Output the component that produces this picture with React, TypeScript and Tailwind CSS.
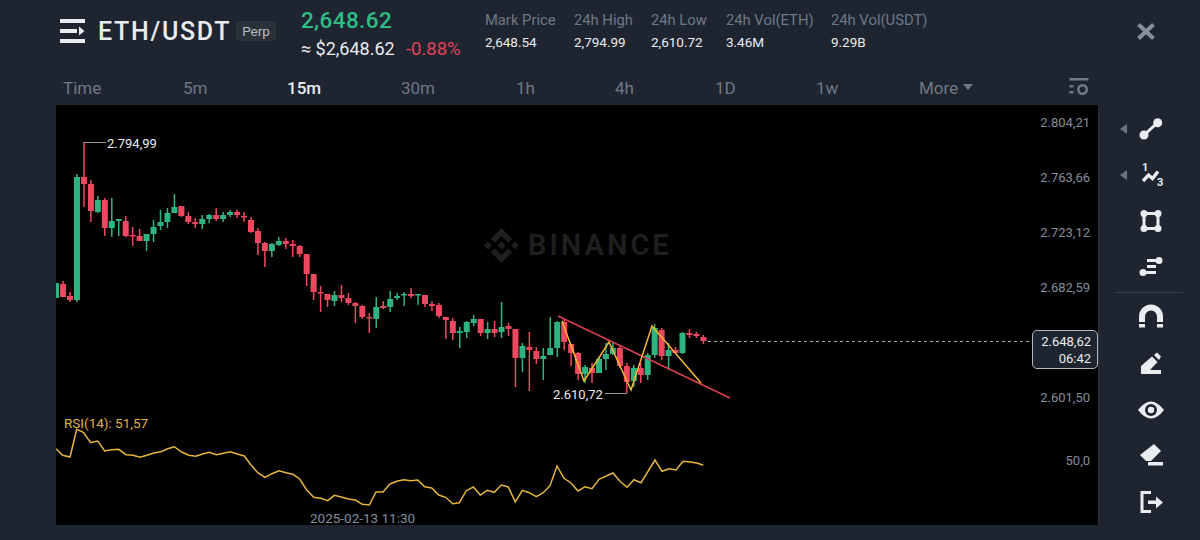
// [up, high, bodyTop, bodyBottom, low], one candle every 6.96px
const candles: [number, number, number, number, number][] = [
  [1, 283, 283, 298, 298], [0, 281, 284, 297, 297], [0, 292, 296, 300, 302], [1, 174, 177, 300, 302],
  [0, 142, 177, 184, 207], [0, 180, 184, 211, 222], [1, 196, 200, 212, 213], [0, 198, 200, 228, 236],
  [1, 198, 221, 228, 237], [1, 219, 219, 221, 236], [0, 216, 221, 236, 237], [0, 227, 235, 236, 246],
  [0, 229, 236, 241, 241], [1, 234, 234, 241, 251], [1, 220, 227, 234, 242], [1, 210, 222, 226, 230],
  [1, 208, 213, 222, 228], [1, 194, 207, 213, 213], [0, 206, 206, 216, 217], [0, 212, 216, 222, 224],
  [0, 218, 222, 224, 228], [1, 215, 219, 224, 229], [1, 214, 215, 219, 223], [0, 208, 215, 219, 221],
  [1, 212, 215, 219, 222], [1, 210, 212, 215, 217], [0, 210, 212, 215, 218], [0, 212, 216, 217, 222],
  [0, 217, 220, 232, 233], [0, 228, 231, 243, 255], [0, 242, 243, 251, 267], [1, 243, 244, 251, 257],
  [1, 237, 241, 245, 246], [0, 238, 241, 244, 249], [0, 240, 244, 246, 257], [0, 245, 246, 254, 257],
  [0, 254, 254, 274, 286], [0, 274, 274, 292, 300], [0, 286, 292, 293, 312], [0, 294, 294, 300, 307],
  [1, 291, 295, 301, 306], [0, 285, 295, 298, 302], [0, 293, 298, 303, 305], [0, 302, 303, 306, 323],
  [0, 305, 306, 317, 319], [0, 313, 317, 318, 333], [1, 297, 307, 319, 328], [0, 301, 306, 308, 309],
  [1, 291, 299, 307, 312], [1, 293, 296, 298, 300], [1, 292, 294, 295, 306], [0, 288, 294, 296, 298],
  [1, 294, 294, 295, 305], [0, 295, 295, 304, 307], [0, 301, 304, 306, 311], [0, 303, 305, 316, 318],
  [0, 317, 317, 320, 339], [0, 318, 321, 333, 340], [1, 327, 331, 333, 348], [1, 321, 322, 332, 338],
  [1, 315, 319, 323, 326], [0, 319, 319, 333, 336], [1, 322, 329, 333, 339], [0, 321, 329, 333, 337],
  [1, 302, 327, 332, 338], [0, 323, 326, 329, 336], [0, 329, 329, 358, 387], [1, 343, 346, 358, 372],
  [0, 332, 347, 350, 391], [0, 347, 351, 359, 364], [1, 348, 356, 359, 380], [1, 317, 348, 355, 355],
  [1, 321, 322, 348, 357], [0, 319, 322, 342, 350], [0, 344, 344, 353, 366], [0, 352, 353, 374, 380],
  [1, 365, 367, 374, 383], [0, 363, 368, 373, 383], [1, 357, 359, 373, 373], [1, 343, 354, 359, 370],
  [1, 343, 348, 354, 355], [0, 346, 348, 366, 368], [0, 363, 366, 382, 393], [1, 365, 368, 381, 387],
  [0, 363, 368, 375, 383], [1, 353, 355, 375, 380], [1, 324, 328, 355, 358], [0, 328, 330, 356, 360],
  [1, 343, 350, 356, 370], [0, 347, 350, 353, 354], [1, 332, 333, 353, 354], [0, 329, 333, 335, 338],
  [0, 332, 334, 336, 338], [0, 335, 337, 341, 344],
];

const rsiLeft = [
  18, 131, 38, 151, 60, 156, 80, 73, 100, 82, 122, 113, 143, 108, 164, 138, 185, 134, 206, 133, 228, 149, 249, 151,
  270, 157, 291, 151, 312, 144, 332, 140, 353, 131, 373, 125, 395, 141, 416, 151, 437, 154, 458, 147, 478, 142,
  499, 149, 520, 145, 541, 140, 562, 147, 583, 153, 603, 180, 624, 204, 645, 217, 666, 206, 687, 197, 708, 203,
  729, 208, 749, 222, 770, 255, 791, 277, 812, 280, 833, 287, 853, 271, 874, 276, 895, 282, 916, 285, 937, 298,
  958, 300, 978, 261, 999, 261, 1020, 237, 1041, 229,
];
const rsiRight = [
  20, 124, 41, 119, 62, 122, 83, 120, 104, 140, 125, 144, 146, 165, 167, 172, 188, 191, 208, 188, 229, 152, 250, 141,
  271, 165, 292, 151, 313, 157, 334, 135, 355, 141, 376, 186, 397, 151, 418, 158, 439, 170, 460, 158, 480, 137,
  501, 78, 522, 115, 543, 129, 564, 153, 585, 140, 606, 146, 627, 118, 669, 99, 690, 124, 711, 142, 732, 119,
  753, 128, 795, 60, 816, 94, 837, 86, 858, 90, 879, 64, 900, 66, 921, 69, 940, 76,
];

function toPoints(raw: number[], ox: number, oy: number) {
  const out: string[] = [];
  for (let i = 0; i < raw.length; i += 2) {
    out.push(`${(ox + raw[i] / 3).toFixed(1)},${(oy + raw[i + 1] / 3).toFixed(1)}`);
  }
  return out.join(' ');
}
const rsiPoints = toPoints(rsiLeft, 50, 405) + ' ' + toPoints(rsiRight, 390, 440);

const stats = [
  { label: 'Mark Price', value: '2,648.54', w: 'w-[89px]' },
  { label: '24h High', value: '2,794.99', w: 'w-[77px]' },
  { label: '24h Low', value: '2,610.72', w: 'w-[75px]' },
  { label: '24h Vol(ETH)', value: '3.46M', w: 'w-[105px]' },
  { label: '24h Vol(USDT)', value: '9.29B', w: 'w-[110px]' },
];

const tabs = [
  { label: 'Time', w: 'w-[120px]' },
  { label: '5m', w: 'w-[104px]' },
  { label: '15m', w: 'w-[114px]', active: true },
  { label: '30m', w: 'w-[115px]' },
  { label: '1h', w: 'w-[99px]' },
  { label: '4h', w: 'w-[100px]' },
  { label: '1D', w: 'w-[101px]' },
  { label: '1w', w: 'w-[103px]' },
];

const axis = [
  { label: '2.804,21', top: 'top-[8px]' },
  { label: '2.763,66', top: 'top-[63px]' },
  { label: '2.723,12', top: 'top-[118px]' },
  { label: '2.682,59', top: 'top-[173px]' },
  { label: '2.601,50', top: 'top-[283px]' },
  { label: '50,0', top: 'top-[346px]' },
];

function ToolIcon({ children, arrow }: { children: React.ReactNode; arrow?: boolean }) {
  return (
    <div className="relative flex h-[46px] w-full items-center justify-center">
      {arrow && <div className="absolute left-[21px] h-0 w-0 border-y-[5px] border-r-[7px] border-y-transparent border-r-[#6b7280]" />}
      <svg width="28" height="28" viewBox="0 0 28 28" fill="#eaecef" className="ml-[2px]">
        {children}
      </svg>
    </div>
  );
}

function Toolbar() {
  return (
    <div className="flex w-[101px] flex-col items-center pt-[1px]">
      <ToolIcon arrow>
        <circle cx="7" cy="20" r="4.5" />
        <circle cx="20.7" cy="7.7" r="4.5" />
        <path d="M7 20 20.7 7.7" stroke="#eaecef" strokeWidth="3" />
      </ToolIcon>
      <ToolIcon arrow>
        <text x="5" y="10" fontSize="11" fontWeight="700" fontFamily="Roboto, sans-serif">1</text>
        <text x="20" y="25" fontSize="11" fontWeight="700" fontFamily="Roboto, sans-serif">3</text>
        <path d="M6 20 11.5 14 15.500 17.500 21 10.500" fill="none" stroke="#eaecef" strokeWidth="3.400" />
      </ToolIcon>
      <ToolIcon>
        <rect x="7" y="6.5" width="14" height="15" fill="none" stroke="#eaecef" strokeWidth="3" />
        <circle cx="7" cy="6.5" r="3.5" />
        <circle cx="21" cy="6.5" r="3.5" />
        <circle cx="7" cy="21.5" r="3.5" />
        <circle cx="21" cy="21.5" r="3.5" />
      </ToolIcon>
      <ToolIcon>
        <circle cx="22" cy="7.5" r="3.5" />
        <rect x="10" y="6" width="12" height="3" />
        <rect x="10" y="12" width="9" height="3" />
        <rect x="6" y="18" width="13" height="3" />
        <circle cx="6" cy="19.5" r="3.5" />
      </ToolIcon>
      <div className="my-[2px] h-px w-[67px] bg-[#3a404a]" />
      <ToolIcon>
        <path d="M5 18V12.500a9 9 0 0 1 18 0V18" fill="none" stroke="#eaecef" strokeWidth="6" />
        <rect x="2" y="20" width="6" height="3.500" />
        <rect x="20" y="20" width="6" height="3.500" />
      </ToolIcon>
      <ToolIcon>
        <path d="M4 24V16L15 6.5 20.500 12 13 20H24V24Z" />
        <path d="M17 5 20 2.500 24 6.500 22 10Z" />
      </ToolIcon>
      <ToolIcon>
        <path d="M1 14Q14-3 27 14 14 31 1 14Z" />
        <circle cx="14" cy="14" r="6" fill="#1e2530" />
        <circle cx="14" cy="14" r="3.200" />
      </ToolIcon>
      <ToolIcon>
        <path d="M17 2 24 9 14 19H9L3 13Z" />
        <rect x="11" y="20" width="15" height="3.500" />
      </ToolIcon>
      <ToolIcon>
        <path d="M14 4.500H5V23.500H14" fill="none" stroke="#eaecef" strokeWidth="3" />
        <rect x="11" y="12.500" width="8" height="3.500" />
        <path d="M19 8.500 26 14.500 19 20.500Z" />
      </ToolIcon>
    </div>
  );
}

function Chart() {
  return (
    <div className="relative ml-[56px] h-[420px] w-[1043px] overflow-hidden border-r border-[#2b313a] bg-black text-[13px]">
      <div className="absolute left-[428px] top-[119px] flex items-center gap-[9px] text-[#1f1f1f]">
        <svg width="35" height="35" viewBox="0 0 126.610 126.610" fill="#1f1f1f">
          <path d="M38.730 53.200l24.590-24.580 24.600 24.600 14.300-14.310L63.320 0 24.430 38.900l14.300 14.300zM0 63.310l14.300-14.310 14.310 14.310-14.310 14.300zM38.730 73.410l24.590 24.590 24.600-24.600 14.310 14.290-38.900 38.910-38.910-38.880-.02-.02zM98 63.310l14.300-14.310 14.310 14.300-14.310 14.320z" />
          <path d="M77.830 63.300L63.320 48.780 52.590 59.510l-1.240 1.230-2.540 2.540 14.510 14.500 14.510-14.470z" />
        </svg>
        <span className="text-[29px] font-semibold tracking-[3px]">BINANCE</span>
      </div>

      <svg className="absolute inset-0" width="1042" height="420" viewBox="56 105 1042 420">
        {candles.map(([up, hi, top, bot, lo], i) => {
          const x = 56.100 + 6.960 * i;
          const c = up ? '#2fb380' : '#ee4860';
          return (
            <g key={i} fill={c}>
              <rect x={x - 0.750} y={hi} width="1.500" height={lo - hi} />
              <rect x={x - 3} y={top} width="6" height={Math.max(bot - top, 1.500)} />
            </g>
          );
        })}
        <path d="M84 142.500H106M605 393.500H627" stroke="#9a9a9a" strokeWidth="1" />
        <path d="M708 341.500H1032" stroke="#a8a8a8" strokeWidth="1" strokeDasharray="3 3" />
        <path d="M558 316 730 398" stroke="#d9404f" strokeWidth="1.500" fill="none" />
        <path d="M562 321 584 381 609 342 631 390 652 326 701 383" stroke="#f5b82e" strokeWidth="1.500" fill="none" />
        <polyline points={rsiPoints} fill="none" stroke="#e6b53e" strokeWidth="1.500" />
      </svg>

      <span className="absolute left-[51px] top-[29px] text-[#eaecef]">2.794,99</span>
      <span className="absolute left-[497px] top-[280px] text-[#eaecef]">2.610,72</span>
      <span className="absolute left-[8px] top-[308px] text-[13.500px] text-[#e0b040]">RSI(14): 51,57</span>
      <span className="absolute left-[254px] top-[403px] text-[13.500px] text-[#848e9c]">2025-02-13 11:30</span>

      {axis.map((a) => (
        <span key={a.label} className={`absolute right-[8px] text-[#848e9c] ${a.top}`}>
          {a.label}
        </span>
      ))}

      <div className="absolute right-0 top-[225px] flex h-[39px] w-[66px] flex-col items-end justify-center rounded-[5px] border border-[#b4b7bb] bg-[#1e2530] pr-[6px] leading-[17px] text-[#eaecef]">
        <span>2.648,62</span>
        <span>06:42</span>
      </div>
    </div>
  );
}

export default function App() {
  return (
    <div className="h-[540px] w-[1200px] overflow-hidden bg-[#1e2530] font-['Roboto',sans-serif]">
      <div className="flex h-[72px] items-start">
        <svg width="25" height="24" viewBox="0 0 25 24" fill="#eaecef" className="ml-[60px] mt-[19px]">
          <rect width="25" height="4" />
          <rect y="10" width="17" height="4" />
          <path d="M19 7.500 24.500 12 19 16.500Z" />
          <rect y="20" width="25" height="4" />
        </svg>
        <span className="ml-[13px] mt-[16px] text-[25px] font-medium leading-[32px] tracking-[1.700px] text-[#eaecef]">ETH/USDT</span>
        <span className="ml-[5px] mt-[21px] rounded-[3px] bg-[#2b3139] px-[6px] text-[13.500px] leading-[20px] text-[#b7bdc6]">Perp</span>
        <div className="ml-[25px] mt-[6px] w-[184px]">
          <div className="text-[22.500px] font-medium leading-[28px] tracking-[0.400px] text-[#2ebd85]">2,648.62</div>
          <div className="mt-[2px] flex text-[18px] leading-[26px]">
            <span className="w-[105px] text-[#eaecef]">≈ $2,648.62</span>
            <span className="text-[18.500px] text-[#e0415a]">-0.88%</span>
          </div>
        </div>
        <div className="mt-[10px] flex">
          {stats.map((s) => (
            <div key={s.label} className={s.w}>
              <div className="text-[14.800px] leading-[20px] text-[#6f7885]">{s.label}</div>
              <div className="mt-[2px] text-[13.500px] leading-[20px] text-[#eaecef]">{s.value}</div>
            </div>
          ))}
        </div>
        <svg width="18" height="17" viewBox="0 0 18 17" className="ml-[196px] mt-[23px]" stroke="#848e9c" strokeWidth="4" fill="none">
          <path d="M1.500 1.500 16.500 15.500M16.500 1.500 1.500 15.500" />
        </svg>
      </div>

      <div className="flex h-[33px] items-start pl-[63px] pt-[4px] text-[17px] leading-[24px] text-[#6f7885]">
        {tabs.map((t) => (
          <span key={t.label} className={`${t.w} ${t.active ? 'font-medium text-[#eaecef]' : ''}`}>
            {t.label}
          </span>
        ))}
        <span>More</span>
        <div className="ml-[5px] mt-[8px] h-0 w-0 border-x-[5.500px] border-t-[6px] border-x-transparent border-t-[#6f7885]" />
        <svg width="20" height="19" viewBox="0 0 20 19" fill="#6f7885" className="ml-[96px] mt-[2px]">
          <rect x="0.500" width="19" height="2.500" />
          <rect x="0.500" y="7" width="4" height="2.500" />
          <rect x="0.500" y="13" width="4" height="2.500" />
          <circle cx="13.500" cy="11.500" r="4.200" fill="none" stroke="#6f7885" strokeWidth="2.600" />
        </svg>
      </div>

      <div className="flex">
        <Chart />
        <Toolbar />
      </div>
    </div>
  );
}
